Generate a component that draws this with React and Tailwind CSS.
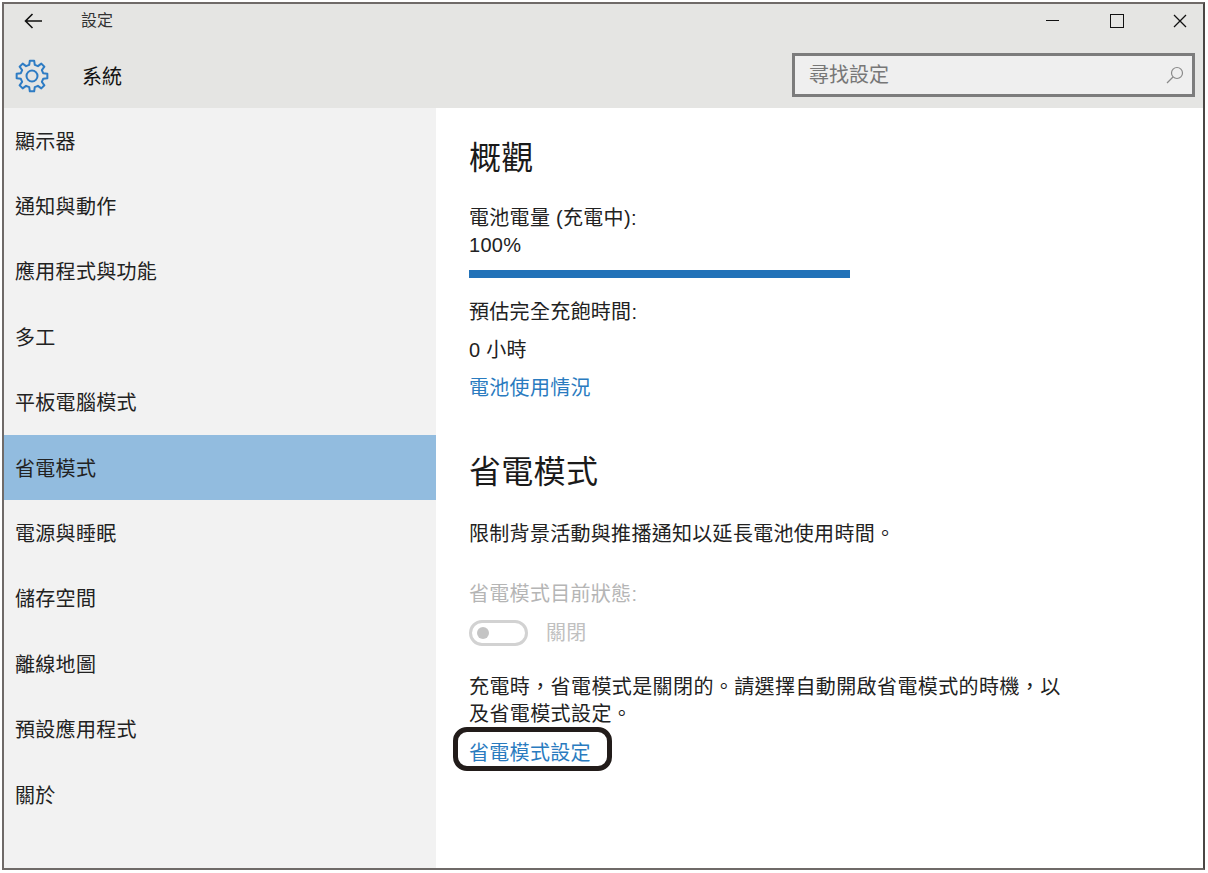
import React from "react";

const FONT = "font-['Liberation_Sans','Noto_Sans_CJK_TC',sans-serif]";
const items = ["顯示器","通知與動作","應用程式與功能","多工","平板電腦模式","省電模式","電源與睡眠","儲存空間","離線地圖","預設應用程式","關於"];

function Gear() {
  const n = 8, R = 15.5, r = 11.5;
  let d = "";
  for (let i = 0; i < n; i++) {
    const a = (i / n) * Math.PI * 2 - Math.PI / 2;
    const s = Math.PI / n;
    const pts = [[r, a - s * 0.62], [R, a - s * 0.36], [R, a + s * 0.36], [r, a + s * 0.62]];
    pts.forEach(([q, t], j) => {
      const x = (17 + q * Math.cos(t)).toFixed(2), y = (17 + q * Math.sin(t)).toFixed(2);
      d += (i === 0 && j === 0 ? "M" : "L") + x + " " + y + " ";
    });
  }
  d += "Z";
  return (
    <svg width="34" height="34" viewBox="0 0 34 34" fill="none" stroke="#2e7cc4" strokeWidth="2" strokeLinejoin="round">
      <path d={d} />
      <circle cx="17" cy="17" r="5.5" />
    </svg>
  );
}

export default function App() {
  return (
    <div className={`${FONT} w-[1208px] h-[873px] bg-white pt-[2px] pl-[2px] overflow-hidden`}>
      <div className="w-[1203px] h-[868px] border-2 border-[#6f6a68] border-r-[#4a4644] flex flex-col bg-white">
        <header className="h-[104px] shrink-0 bg-[#e5e5e3] flex flex-col">
          <div className="h-[33px] shrink-0 flex items-center text-[#222]">
            <svg className="ml-[20px]" width="18" height="16" viewBox="0 0 18 16" fill="none" stroke="#111" strokeWidth="1.6">
              <path d="M8.5 1 1.5 8l7 7M1.5 8H18" />
            </svg>
            <span className="ml-[39px] text-[16px] text-[#333]">設定</span>
            <div className="ml-auto flex items-center">
              <span className="w-[13px] h-[1px] bg-[#111]" />
              <span className="ml-[51px] w-[14px] h-[14px] border-[1.5px] border-[#111]" />
              <svg className="ml-[49px] mr-[16px]" width="14" height="14" viewBox="0 0 14 14" stroke="#111" strokeWidth="1.3">
                <path d="M1 1l12 12M13 1 1 13" />
              </svg>
            </div>
          </div>
          <div className="flex items-center h-[71px] pt-[5px]">
            <span className="ml-[11px] mt-[2px]"><Gear /></span>
            <span className="ml-[33px] mt-[4px] text-[20px] text-[#111]">系統</span>
            <div className="ml-auto mr-[8px] w-[403px] h-[44px] border-[3px] border-[#7c7c7c] bg-[#efefef] flex items-center pl-[14px] pr-[8px]">
              <span className="text-[20px] text-[#777]">尋找設定</span>
              <svg className="ml-auto" width="18" height="18" viewBox="0 0 18 18" fill="none" stroke="#8a8a8a" strokeWidth="1.2">
                <circle cx="11" cy="7" r="5.5" />
                <path d="M7 11 1 17" />
              </svg>
            </div>
          </div>
        </header>
        <div className="flex-1 flex min-h-0">
          <nav className="w-[432px] bg-[#f2f2f2] shrink-0">
            {items.map((t, i) => (
              <div key={t} className={`h-[65.4px] flex items-center pl-[11px] pt-[2px] text-[20px] tracking-[0.3px] text-[#222] ${i === 5 ? "bg-[#92bcdf]" : ""}`}>{t}</div>
            ))}
          </nav>
          <main className="flex-1 pl-[33px] text-[#222] tracking-[0.3px]">
            <h1 className="text-[32px] leading-[40px] mt-[30px] text-[#1a1a1a]">概觀</h1>
            <p className="text-[20px] leading-[28px] mt-[26px]">電池電量 (充電中):</p>
            <p className="text-[20px] leading-[28px] mt-[-1px]">100%</p>
            <div className="w-[381px] h-[8px] bg-[#2272b8] mt-[11px]" />
            <p className="text-[20px] leading-[28px] mt-[20px]">預估完全充飽時間:</p>
            <p className="text-[20px] leading-[28px] mt-[10px]">0 小時</p>
            <p className="text-[20px] leading-[28px] mt-[10px] text-[#2a7bbf]">電池使用情況</p>
            <h2 className="text-[32px] leading-[40px] mt-[50px] text-[#1a1a1a]">省電模式</h2>
            <p className="text-[20px] leading-[28px] mt-[28px]">限制背景活動與推播通知以延長電池使用時間。</p>
            <p className="text-[20px] leading-[28px] mt-[32px] text-[#b5b5b5]">省電模式目前狀態:</p>
            <div className="flex items-center mt-[11px] h-[28px]">
              <span className="w-[59px] h-[26px] rounded-full border-[3px] border-[#d2d2d2] flex items-center pl-[5px]">
                <span className="w-[12px] h-[12px] rounded-full bg-[#c4c4c4]" />
              </span>
              <span className="ml-[18px] text-[20px] text-[#c0c0c0]">關閉</span>
            </div>
            <p className="text-[20px] leading-[27px] mt-[27px] w-[596px] tracking-[0.4px]">充電時，省電模式是關閉的。請選擇自動開啟省電模式的時機，以及省電模式設定。</p>
            <div className="relative mt-[11px] h-[28px] text-[20px] leading-[28px] text-[#2a7bbf]">
              省電模式設定
              <span className="absolute left-[-16px] top-[-12px] w-[159px] h-[44px] rounded-[14px] border-[5px] border-[#221c1a]" />
            </div>
          </main>
        </div>
      </div>
    </div>
  );
}
